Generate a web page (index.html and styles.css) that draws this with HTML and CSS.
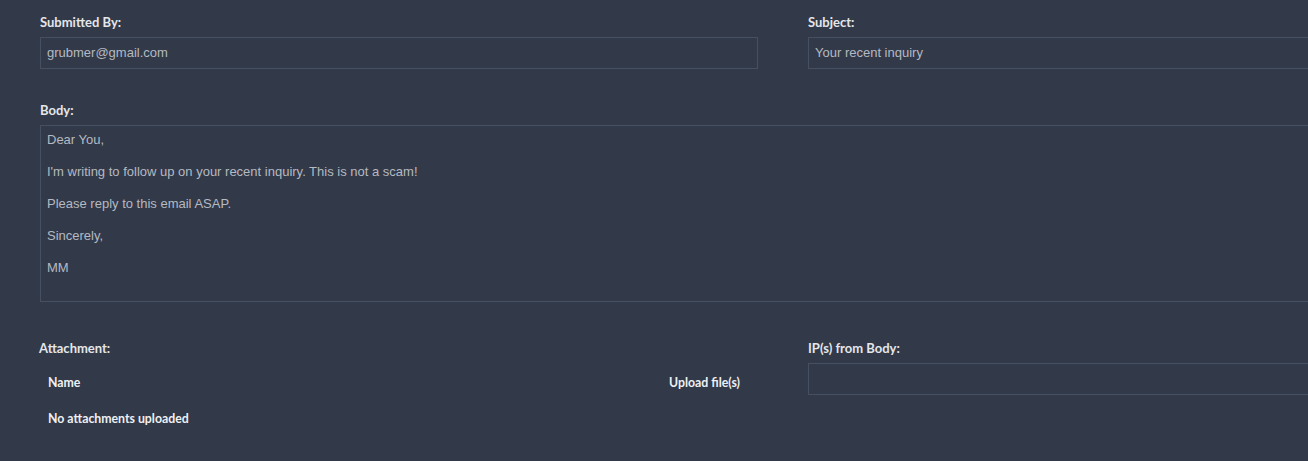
FILE: index.html
```html
<!DOCTYPE html>
<html>
<head>
<meta charset="utf-8">
<link rel="stylesheet" href="styles.css">
</head>
<body>
<div class="page">
  <div class="row two">
    <div class="field">
      <div class="label">Submitted By:</div>
      <div class="input">grubmer@gmail.com</div>
    </div>
    <div class="field">
      <div class="label">Subject:</div>
      <div class="input">Your recent inquiry</div>
    </div>
  </div>
  <div class="row body-row">
    <div class="field">
      <div class="label">Body:</div>
      <div class="textarea">
        <p>Dear You,</p>
        <p>I'm writing to follow up on your recent inquiry. This is not a scam!</p>
        <p>Please reply to this email ASAP.</p>
        <p>Sincerely,</p>
        <p>MM</p>
      </div>
    </div>
  </div>
  <div class="row two bottom">
    <div class="field">
      <div class="label att">Attachment:</div>
      <div class="att-table">
        <div class="att-head">
          <span class="col-name">Name</span>
          <span class="col-upload">Upload file(s)</span>
        </div>
        <div class="att-empty">No attachments uploaded</div>
      </div>
    </div>
    <div class="field">
      <div class="label">IP(s) from Body:</div>
      <div class="input"></div>
    </div>
  </div>
</div>
</body>
</html>
```
FILE: styles.css
```css
html, body {
  margin: 0;
  padding: 0;
  background: #323949;
  overflow: hidden;
}
.page {
  width: 1490px;
  padding: 15px 0 0 40px;
}
.row.two {
  display: grid;
  grid-template-columns: 718px 718px;
  column-gap: 50px;
}
.label {
  font-family: Lato, "Liberation Sans", sans-serif;
  font-weight: 700;
  font-size: 13px;
  line-height: 14px;
  color: #e4e6ea;
  margin-bottom: 8px;
}
.input {
  box-sizing: border-box;
  height: 32px;
  border: 1px solid #465063;
  font-family: "Liberation Sans", Arial, sans-serif;
  font-size: 13px;
  line-height: 30px;
  color: #b5b9c1;
  padding: 0 6px;
}
.body-row {
  margin-top: 34px;
}
.textarea {
  box-sizing: border-box;
  height: 177px;
  border: 1px solid #465063;
  font-family: "Liberation Sans", Arial, sans-serif;
  font-size: 13px;
  line-height: 16px;
  color: #b5b9c1;
  padding: 6px 6px;
}
.textarea p {
  margin: 0 0 16px 0;
}
.bottom {
  margin-top: 39px;
}
.label.att {
  margin-left: -1px;
}
.att-table {
  font-family: Lato, "Liberation Sans", sans-serif;
  font-weight: 700;
  font-size: 12.3px;
  color: #eef0f3;
}
.att-head {
  display: flex;
  justify-content: space-between;
  padding: 5px 18px 0 8px;
  line-height: 30px;
}
.att-empty {
  padding-left: 8px;
  line-height: 30px;
  margin-top: 6px;
}
```
